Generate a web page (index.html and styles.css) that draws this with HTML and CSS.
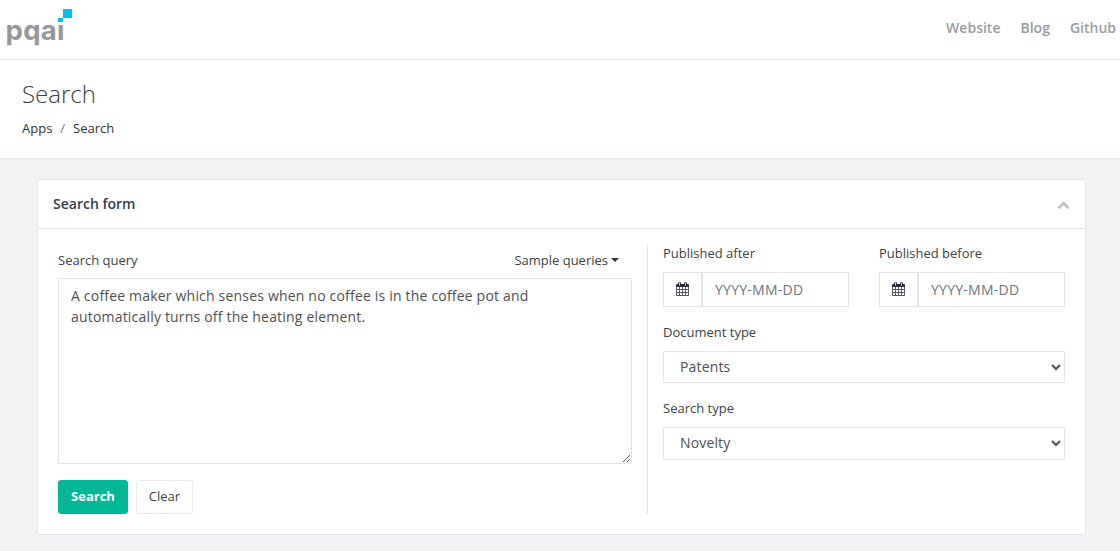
FILE: index.html
```html
<!DOCTYPE html>
<html lang="en">
<head>
<meta charset="utf-8">
<title>PQAI Search</title>
<link rel="stylesheet" href="styles.css">
</head>
<body>
<nav class="navbar">
  <svg class="logo" width="72" height="46" viewBox="0 0 72 46" role="img" aria-label="pqai">
    <text class="logo-text" x="5.500" y="39.500" textLength="59" lengthAdjust="spacing">pqaı</text>
    <rect x="63" y="9" width="9" height="9" fill="#00bdf2"/>
    <rect x="58" y="18" width="5" height="4" fill="#00bdf2"/>
  </svg>
  <div class="nav-links"><a>Website</a><a>Blog</a><a>Github</a></div>
</nav>
<header class="page-heading">
  <h2>Search</h2>
  <div class="breadcrumb"><span>Apps</span><span class="slash">/</span><span>Search</span></div>
</header>
<main class="card">
  <div class="card-title">
    <h5>Search form</h5>
    <svg class="collapse" width="13" height="9" viewBox="0 0 13 9"><path d="M1.400 7.200 6.500 2.200l5.100 5" fill="none" stroke="#c4c4c4" stroke-width="3"/></svg>
  </div>
  <div class="card-body">
    <section class="query">
      <div class="query-head">
        <label>Search query</label>
        <span class="dropdown">Sample queries<i class="caret"></i></span>
      </div>
      <textarea class="query-input" spellcheck="false">A coffee maker which senses when no coffee is in the coffee pot and
automatically turns off the heating element.</textarea>
      <div class="buttons"><button class="btn primary">Search</button><button class="btn">Clear</button></div>
    </section>
    <section class="filters">
      <div class="dates">
        <div class="field">
          <label>Published after</label>
          <div class="input-group">
            <span class="addon"><svg width="13" height="14" viewBox="0 0 13 14"><path class="cal-grid" d="M.5 5v8.500h12V5M3.500 5v8.500M6.500 5v8.500M9.500 5v8.500M.5 7.500h12M.5 10.500h12"/><path class="cal-top" d="M0 5V3q0-1 1-1h11q1 0 1 1v2z"/><path class="cal-ring" d="M3.500.500v3M9.500.500v3"/><path class="cal-hole" d="M3.500 1v2.500M9.500 1v2.500"/></svg></span>
            <input type="text" placeholder="YYYY-MM-DD">
          </div>
        </div>
        <div class="field">
          <label>Published before</label>
          <div class="input-group">
            <span class="addon"><svg width="13" height="14" viewBox="0 0 13 14"><path class="cal-grid" d="M.5 5v8.500h12V5M3.500 5v8.500M6.500 5v8.500M9.500 5v8.500M.5 7.500h12M.5 10.500h12"/><path class="cal-top" d="M0 5V3q0-1 1-1h11q1 0 1 1v2z"/><path class="cal-ring" d="M3.500.500v3M9.500.500v3"/><path class="cal-hole" d="M3.500 1v2.500M9.500 1v2.500"/></svg></span>
            <input type="text" placeholder="YYYY-MM-DD">
          </div>
        </div>
      </div>
      <div class="field doc-type">
        <label>Document type</label>
        <select><option>Patents</option></select>
      </div>
      <div class="field search-type">
        <label>Search type</label>
        <select><option>Novelty</option></select>
      </div>
    </section>
  </div>
</main>
</body>
</html>
```
FILE: styles.css
```css
* { box-sizing: border-box; }
html { overflow: hidden; }
body {
  margin: 0;
  height: 551px;
  background: #f2f2f4;
  color: #3c3f42;
  font: 13px/20px "Open Sans", "Noto Sans", sans-serif;
}
h2, h5 { margin: 0; }
.navbar {
  height: 60px;
  background: #fff;
  border-bottom: 1px solid #e2e3e5;
  display: flex;
  justify-content: space-between;
}
.logo { display: block; }
.logo-text { font: 700 27.5px Inter, sans-serif; fill: #95989b; }
.nav-links {
  display: flex;
  gap: 20px;
  padding: 18px 4px 0 0;
  font-size: 14px;
  font-weight: 600;
  color: #999c9e;
}
.page-heading {
  height: 99px;
  padding: 20px 22px 0;
  background: #fff;
  border-bottom: 1px solid #e7eaec;
}
.page-heading h2 { font-size: 24px; font-weight: 300; line-height: 28px; }
.breadcrumb { display: flex; gap: 8px; margin-top: 10px; color: #303336; }
.slash { color: #6c757d; }
.card {
  width: 1049px;
  height: 356px;
  margin: 20px 0 0 37px;
  background: #fff;
  border: 1px solid #e4e6e8;
  border-radius: 3px 3px 0 0;
}
.card-title {
  height: 49px;
  padding: 0 15px;
  display: flex;
  justify-content: space-between;
  align-items: center;
  border-bottom: 1px solid #e4e6e8;
}
.card-title h5 { font-size: 14px; font-weight: 600; color: #2f4050; }
.collapse { margin-top: 2px; }
.card-body { display: flex; padding: 15px 20px 0; }
.query { width: 574px; }
.query-head {
  height: 34px;
  padding: 6px 13px 0 0;
  display: flex;
  justify-content: space-between;
}
.dropdown { display: flex; align-items: center; height: 20px; }
.caret {
  margin-left: 3px;
  border: 4px solid transparent;
  border-top-color: #303336;
  border-bottom: 0;
}
.query-input {
  display: block;
  width: 574px;
  height: 186px;
  padding: 6px 12px;
  border: 1px solid #e2e4e6;
  border-radius: 1px;
  outline: 0;
  background: #fff;
  color: #4e5052;
  font: 14px/21px "Open Sans", "Noto Sans", sans-serif;
  letter-spacing: .19px;
  font-variant-ligatures: none;
}
.buttons { display: flex; gap: 8px; margin-top: 16px; }
.btn {
  width: 57px;
  height: 34px;
  padding: 0 0 2px;
  border: 1px solid #e7eaec;
  border-radius: 3px;
  background: #fff;
  color: #3c3f42;
  font: 13px/20px "Open Sans", "Noto Sans", sans-serif;
}
.btn.primary { width: 70px; background: #00b798; border-color: #00b798; color: #fff; font-weight: 700; }
.filters {
  width: 418px;
  height: 270px;
  margin-left: 15px;
  padding-left: 15px;
  border-left: 1px solid #e4e6e8;
}
.field label { display: block; height: 20px; }
.dates { display: flex; gap: 30px; }
.dates .field { width: 186px; }
.dates label { margin-top: -1px; }
.input-group { display: flex; margin-top: 9px; height: 35px; }
.addon {
  width: 39px;
  flex: none;
  display: flex;
  align-items: center;
  justify-content: center;
  padding-bottom: 1px;
  border: 1px solid #e2e4e6;
}
.cal-grid { fill: none; stroke: #5a5366; stroke-width: 1; }
.cal-top { fill: #2f2a3c; }
.cal-ring { fill: none; stroke: #2f2a3c; stroke-width: 3; }
.cal-hole { fill: none; stroke: #d9d8dd; stroke-width: 1; }
.input-group input {
  width: 147px;
  height: 35px;
  padding: 0 12px;
  border: 1px solid #e2e4e6;
  outline: 0;
  background: #fff;
  font: 14px "Open Sans", "Noto Sans", sans-serif;
  letter-spacing: .25px;
}
.input-group input::placeholder { color: #6c757d; }
.doc-type { margin-top: 15px; }
.search-type { margin-top: 15px; }
select {
  display: block;
  width: 402px;
  height: 32px;
  margin-top: 9px;
  padding: 0 12px 2px;
  border: 1px solid #e2e4e6;
  border-radius: 1px;
  background: #fff;
  color: #4e5052;
  font: 14px "Open Sans", "Noto Sans", sans-serif;
  letter-spacing: .15px;
}
.search-type select { height: 33px; padding-right: 12px; }
```
